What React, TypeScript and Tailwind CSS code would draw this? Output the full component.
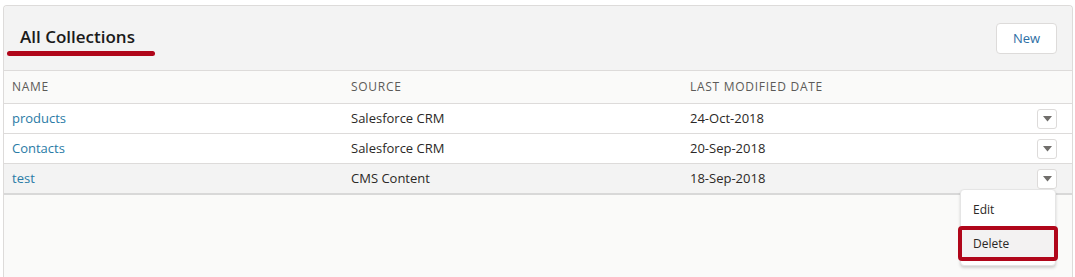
import React from 'react';

const rows = [
  { name: 'products', source: 'Salesforce CRM', date: '24-Oct-2018' },
  { name: 'Contacts', source: 'Salesforce CRM', date: '20-Sep-2018' },
  { name: 'test', source: 'CMS Content', date: '18-Sep-2018', active: true },
];

const Caret = () => (
  <svg width="9" height="6" viewBox="0 0 9 6" className="fill-[#706e6b]">
    <path d="M0 0 H9 L4.5 5.5 Z" />
  </svg>
);

export default function App() {
  return (
    <div className="w-[1075px] h-[277px] bg-white pl-[3px] pr-[2px] pt-[5px] font-['Open_Sans',sans-serif] text-[13px] text-[#16325c] overflow-hidden">
      <div className="h-[272px] border-l border-t border-r border-[#dddbda] rounded-t-[4px] bg-[#fafaf9] flex flex-col">
        {/* Header */}
        <div className="h-[64px] bg-[#f3f3f3] flex items-start justify-between pl-[16px] pr-[15px] shrink-0 rounded-t-[4px]">
          <div className="relative pt-[19px]">
            <h1 className="text-[17px] font-semibold text-[#1a1a1a] leading-[24px]">All Collections</h1>
            <div className="absolute left-[-13px] top-[45px] w-[148px] h-[5px] rounded-full bg-[#b0061a]" />
          </div>
          <button className="mt-[17px] w-[61px] h-[31px] bg-white border border-[#dddbda] rounded-[4px] text-[13px] text-[#2d6ea4]">
            New
          </button>
        </div>

        {/* Table */}
        <div className="flex flex-col border-t border-[#dddbda]">
          <div className="h-[33px] flex items-center text-[12px] tracking-[0.06em] text-[#5c5a58] bg-[#fafaf9] border-b border-[#dddbda]">
            <div className="w-[347px] pl-[8px]">NAME</div>
            <div className="w-[339px]">SOURCE</div>
            <div className="flex-1">LAST MODIFIED DATE</div>
          </div>
          {rows.map((r) => (
            <div
              key={r.name}
              className={`flex items-center text-[#2b2826] ${
                r.active ? 'h-[31px] bg-[#f3f3f3] border-b-2 border-[#d8d8d8]' : 'h-[30px] bg-white border-b border-[#dddbda]'
              }`}
            >
              <div className="w-[347px] pl-[8px] text-[#2a7ba6]">{r.name}</div>
              <div className="w-[339px]">{r.source}</div>
              <div className="flex-1">{r.date}</div>
              <div className="mr-[15px] w-[20px] h-[20px] bg-white border border-[#dddbda] rounded-[3px] flex items-center justify-center">
                <Caret />
              </div>
            </div>
          ))}
          <div className="relative">
            <div className="absolute right-[16px] top-[-6px] w-[96px] bg-white rounded-[4px] shadow-[0_2px_3px_rgba(0,0,0,0.16)] border border-[#e5e5e5] pt-[6px] pb-[4px] text-[12px] text-[#2b2826]">
              <div className="h-[28px] flex items-center pl-[12px]">Edit</div>
              <div className="mx-[-3px] mt-[2px] h-[35px] rounded-[4px] border-[4px] border-[#b0061a] bg-[#f3f2f2] flex items-center pl-[11px]">
                Delete
              </div>
            </div>
          </div>
        </div>
      </div>
    </div>
  );
}
